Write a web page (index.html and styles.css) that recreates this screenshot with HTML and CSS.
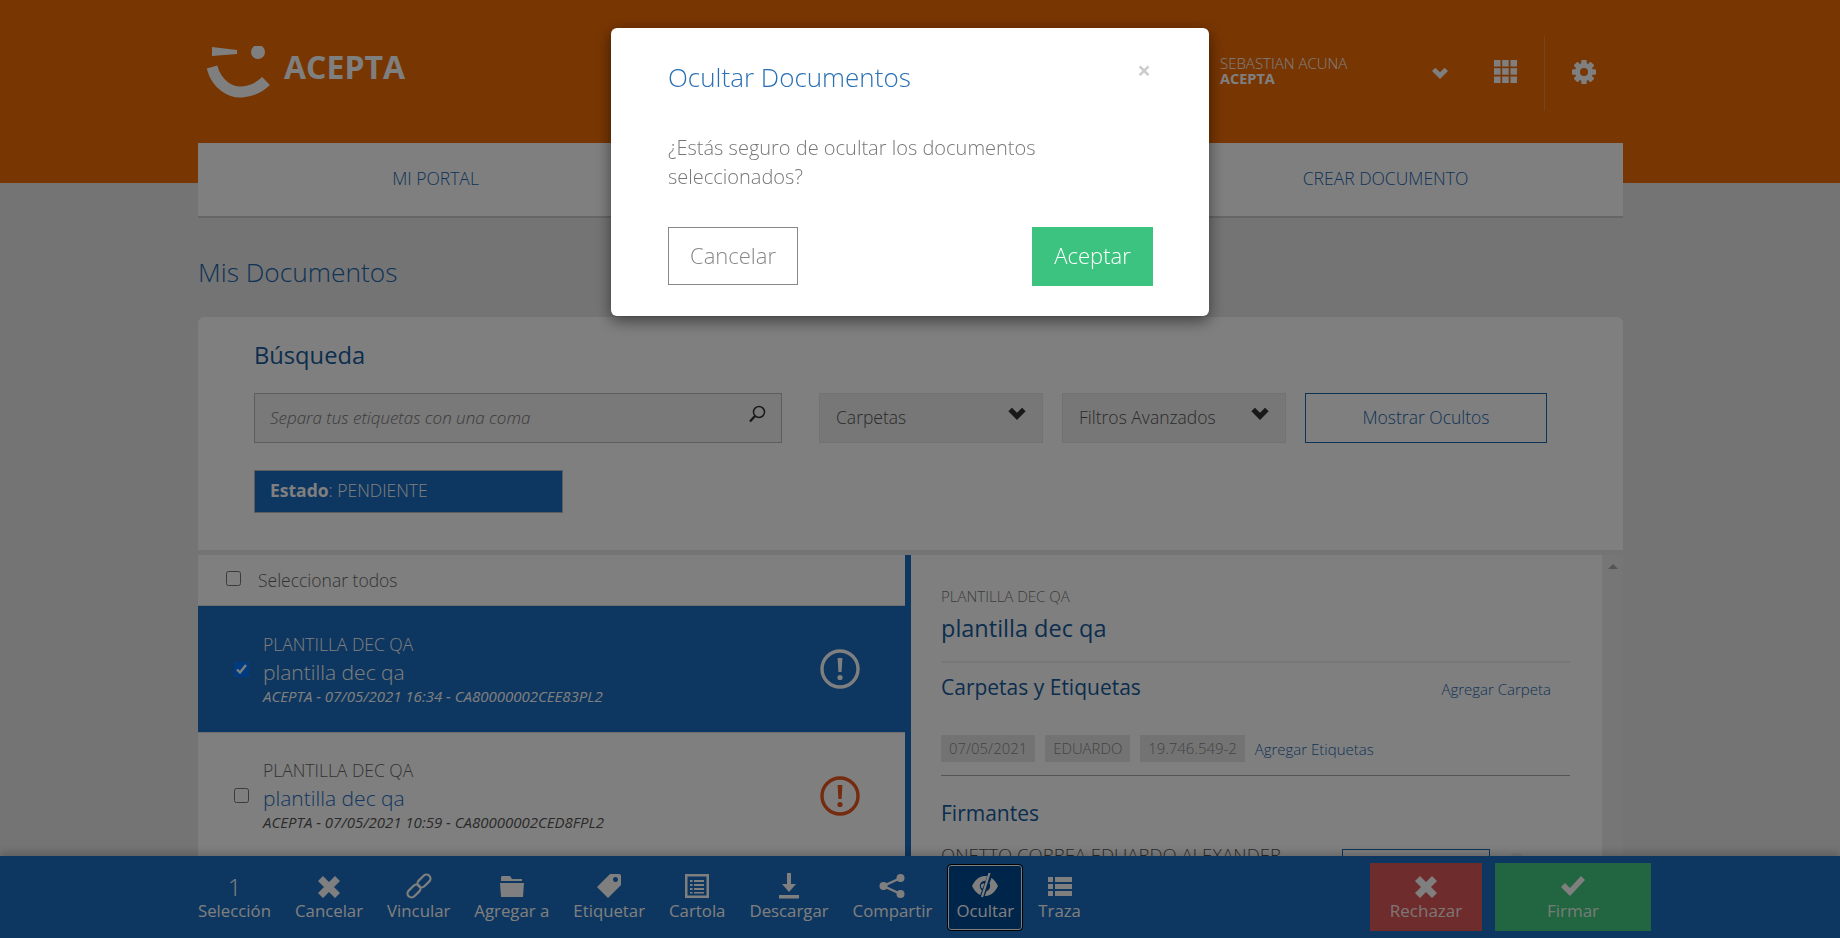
FILE: index.html
```html
<!DOCTYPE html>
<html>
<head>
<meta charset="UTF-8">
<title>Mis Documentos</title>
<link rel="stylesheet" href="styles.css">
</head>

<body>
<div class="top">
	<div class="head">
		<div class="logo">
			<svg width="64" height="52" viewBox="0 0 64 52"><path d="M6 1L31 4V8L6 10Z" fill="#fff"/><circle cx="52" cy="6" r="7" fill="#fff"/><path d="M6 21C11 40 26 47 36 46C46 45 54 41 60 35" fill="none" stroke="#fff" stroke-width="11"/></svg>
			<span>ACEPTA</span>
		</div>
		<div class="user"><span>SEBASTIAN ACUNA</span><b>ACEPTA</b></div>
		<svg class="user-arrow" width="16" height="12" viewBox="0 0 24 18"><path d="M12 18L0 6l5-5 7 7 7-7 5 5z" fill="#fff"/></svg>
		<svg class="apps" width="23" height="23" viewBox="0 0 23 23" fill="#fff"><rect width="6.5" height="6.5"/><rect x="8.2" width="6.5" height="6.5"/><rect x="16.5" width="6.5" height="6.5"/><rect y="8.2" width="6.5" height="6.5"/><rect x="8.2" y="8.2" width="6.5" height="6.5"/><rect x="16.5" y="8.2" width="6.5" height="6.5"/><rect y="16.5" width="6.5" height="6.5"/><rect x="8.2" y="16.5" width="6.5" height="6.5"/><rect x="16.5" y="16.5" width="6.5" height="6.5"/></svg>
		<div class="head-line"></div>
		<svg class="gear" width="24" height="24" viewBox="0 0 24 24" fill="#fff"><rect x="9.2" width="5.6" height="24" rx="1"/><rect x="9.2" width="5.6" height="24" rx="1" transform="rotate(45 12 12)"/><rect x="9.2" width="5.6" height="24" rx="1" transform="rotate(90 12 12)"/><rect x="9.2" width="5.6" height="24" rx="1" transform="rotate(135 12 12)"/><circle cx="12" cy="12" r="9"/><circle cx="12" cy="12" r="4" fill="#f06c06"/></svg>
	</div>
	<ul class="nav">
		<li>MI PORTAL</li>
		<li></li>
		<li>CREAR DOCUMENTO</li>
	</ul>
</div>

<div class="page">
	<h1>Mis Documentos</h1>
	<div class="search">
		<h2>Búsqueda</h2>
		<div class="search-row">
			<div class="field">
				<i>Separa tus etiquetas con una coma</i>
				<svg width="18" height="18" viewBox="0 0 18 18"><circle cx="11" cy="7" r="5.5" fill="none" stroke="#333" stroke-width="1.5"/><path d="M7 11L2 16.5" stroke="#333" stroke-width="2.4"/></svg>
			</div>
			<div class="drop">Carpetas<svg width="18" height="13" viewBox="0 0 24 18"><path d="M12 18L0 6l5-5 7 7 7-7 5 5z" fill="#333"/></svg></div>
			<div class="drop">Filtros Avanzados<svg width="18" height="13" viewBox="0 0 24 18"><path d="M12 18L0 6l5-5 7 7 7-7 5 5z" fill="#333"/></svg></div>
			<div class="btn-line">Mostrar Ocultos</div>
		</div>
		<div class="badge"><b>Estado</b>: PENDIENTE</div>
	</div>

	<div class="split">
		<div class="list">
			<label class="all"><input type="checkbox"><span>Seleccionar todos</span></label>
			<div class="item on">
				<input type="checkbox" checked>
				<div class="item-text">
					<p class="item-type">PLANTILLA DEC QA</p>
					<p class="item-name">plantilla dec qa</p>
					<p class="item-meta">ACEPTA - 07/05/2021 16:34 - CA80000002CEE83PL2</p>
				</div>
				<svg class="alert" width="40" height="40" viewBox="0 0 40 40"><circle cx="20" cy="20" r="18" fill="none" stroke="currentColor" stroke-width="3.4"/><path d="M17.6 9h4.8l-.8 14h-3.2z" fill="currentColor"/><circle cx="20" cy="28.5" r="2.6" fill="currentColor"/></svg>
			</div>
			<div class="item">
				<input type="checkbox">
				<div class="item-text">
					<p class="item-type">PLANTILLA DEC QA</p>
					<p class="item-name">plantilla dec qa</p>
					<p class="item-meta">ACEPTA - 07/05/2021 10:59 - CA80000002CED8FPL2</p>
				</div>
				<svg class="alert" width="40" height="40" viewBox="0 0 40 40"><circle cx="20" cy="20" r="18" fill="none" stroke="currentColor" stroke-width="3.4"/><path d="M17.6 9h4.8l-.8 14h-3.2z" fill="currentColor"/><circle cx="20" cy="28.5" r="2.6" fill="currentColor"/></svg>
			</div>
		</div>
		<div class="detail">
			<div class="detail-in">
				<p class="d-type">PLANTILLA DEC QA</p>
				<p class="d-name">plantilla dec qa</p>
				<div class="d-head"><h3>Carpetas y Etiquetas</h3><a>Agregar Carpeta</a></div>
				<div class="tags"><span>07/05/2021</span><span>EDUARDO</span><span>19.746.549-2</span><a>Agregar Etiquetas</a></div>
				<h3 class="d-firm">Firmantes</h3>
				<div class="signer"><span>ONETTO CORREA EDUARDO ALEXANDER</span><div class="signer-box"></div><div class="signer-dot"></div></div>
			</div>
			<div class="scroll"><div class="scroll-up"></div></div>
		</div>
	</div>
</div>

<div class="bar">
	<div class="tool"><div class="tool-num">1</div><span>Selección</span></div>
	<div class="tool"><svg width="22" height="26" viewBox="0 0 22 26"><path d="M5 3l6 6 6-6 5 5-6 6 6 6-5 5-6-6-6 6-5-5 6-6-6-6z"/></svg><span>Cancelar</span></div>
	<div class="tool"><svg class="hollow" width="26" height="26" viewBox="0 0 26 26"><rect x="0.5" y="14" width="15" height="8" rx="4" transform="rotate(-45 8 18)"/><rect x="10.5" y="4" width="15" height="8" rx="4" transform="rotate(-45 18 8)"/></svg><span>Vincular</span></div>
	<div class="tool"><svg width="26" height="26" viewBox="0 0 26 26"><path d="M3 3h8l2 3h10v2H2V4zM1 10h24l-1 14H2z"/></svg><span>Agregar a</span></div>
	<div class="tool"><svg width="26" height="26" viewBox="0 0 26 26"><path fill-rule="evenodd" d="M14 1h9a2 2 0 0 1 2 2v9L12 25 1 14zM19.5 4a2.5 2.5 0 1 0 .01 0z"/></svg><span>Etiquetar</span></div>
	<div class="tool"><svg width="24" height="26" viewBox="0 0 24 26"><path fill-rule="evenodd" d="M0 1h24v24H0zM2.5 3.5v19h19v-19z"/><path d="M5 7h2.5v2H5zM9 7h10v2H9zM5 11h2.5v2H5zM9 11h10v2H9zM5 15h2.5v2H5zM9 15h10v2H9zM5 19h2.5v1.5H5zM9 19h10v1.5H9z"/></svg><span>Cartola</span></div>
	<div class="tool"><svg width="22" height="26" viewBox="0 0 22 26"><path d="M9 0h4v11h5l-7 8-7-8h5zM1 22h20v3.5H1z"/></svg><span>Descargar</span></div>
	<div class="tool"><svg width="26" height="26" viewBox="0 0 26 26"><circle cx="21.5" cy="5" r="4"/><circle cx="4.5" cy="13" r="4"/><circle cx="21.5" cy="21" r="4"/><path d="M21.5 5L4.5 13l17 8" fill="none" stroke="#fff" stroke-width="2.4"/></svg><span>Compartir</span></div>
	<div class="tool tool-on"><svg width="26" height="26" viewBox="0 0 26 26"><path d="M13 3C6 3 2 9 0 13c2 4 6 10 13 10s11-6 13-10c-2-4-6-10-13-10z"/><circle cx="13" cy="13" r="5.2" fill="#004a95"/><circle cx="11.5" cy="13" r="2.6"/><path d="M18.5 1L9.500 25" stroke="#004a95" stroke-width="4.6"/><path d="M17.5 0L10 24" stroke="#fff" stroke-width="2.2"/></svg><span>Ocultar</span></div>
	<div class="tool"><svg width="26" height="26" viewBox="0 0 26 26"><path d="M1 4h5v5H1zM8 4h17v5H8zM1 11h5v5H1zM8 11h17v5H8zM1 18h5v5H1zM8 18h17v5H8z"/></svg><span>Traza</span></div>
	<div class="bar-right">
		<div class="act act-no"><svg width="22" height="26" viewBox="0 0 22 26"><path d="M5 3l6 6 6-6 5 5-6 6 6 6-5 5-6-6-6 6-5-5 6-6-6-6z"/></svg><span>Rechazar</span></div>
		<div class="act act-ok"><svg width="26" height="26" viewBox="0 0 26 26"><path d="M1 14l4-4 5 5L21 3l4 4-15 16z"/></svg><span>Firmar</span></div>
	</div>
</div>

<div class="shade">
	<div class="modal">
		<div class="modal-top"><h4>Ocultar Documentos</h4><span class="close">×</span></div>
		<p class="modal-text">¿Estás seguro de ocultar los documentos seleccionados?</p>
		<div class="modal-btns"><div class="m-cancel">Cancelar</div><div class="m-ok">Aceptar</div></div>
	</div>
</div>
</body>
</html>
```

FILE: styles.css
```css
*{ margin:0; padding:0; list-style:none; box-sizing:border-box;}
html,body{ height:100%;}
body{ display:flex; flex-direction:column; height:938px; overflow:hidden; background:#e8e8e8; font-family:"Open Sans",sans-serif; font-weight:300; color:#666;}

.top{ height:183px; flex:none; background:#f06c06; padding-left:198px;}
.head{ width:1425px; height:143px; display:flex; align-items:center; padding:0 27px 0 8px; color:#fff;}
.logo{ display:flex; align-items:center; gap:14px;}
.logo span{ font-size:32px; font-weight:700; line-height:32px; padding-bottom:9px;}
.user{ margin-left:auto; width:212px; display:flex; flex-direction:column; font-size:15px; line-height:16px; padding-bottom:1px;}
.user b{ font-size:14.5px; font-weight:700;}
.user-arrow{ margin-right:46px; margin-top:2px;}
.apps{ margin-right:27px;}
.head-line{ width:1px; height:75px; margin:4px 27px 0 0; background:rgba(255,255,255,0.2);}
.nav{ width:1425px; height:75px; display:grid; grid-template-columns:repeat(3,1fr); background:#fff; border-bottom:2px solid #ccc;}
.nav li{ text-align:center; line-height:70px; font-size:17.5px; color:#1a66ad;}

.page{ flex:1; min-height:0; width:1425px; margin-left:198px; padding-top:72px; overflow:hidden;}
h1{ font-size:26.3px; font-weight:300; line-height:34px; color:#1a66ad; margin-bottom:28px;}
.search{ height:233px; background:#fff; border-radius:6px 6px 0 0; padding:23px 0 0 56px;}
.search h2{ font-size:23.7px; font-weight:400; line-height:30px; color:#165a9c;}
.search-row{ display:flex; margin-top:23px; height:50px;}
.field{ width:528px; display:flex; align-items:center; justify-content:space-between; padding:0 15px 2px; background:#f2f2f2; border:1px solid #bbb; font-size:17px; color:#777;}
.field svg{ margin-bottom:6px;}
.drop{ width:224px; margin-left:19px; display:flex; align-items:center; justify-content:space-between; padding:0 16px 2px; background:#efefef; border:1px solid #e4e4e4; font-size:17.5px; color:#555;}
.drop svg{ margin-bottom:8px;}
.search-row .field + .drop{ margin-left:37px;}
.btn-line{ width:242px; margin-left:19px; border:1px solid #1a66ad; line-height:47px; text-align:center; font-size:17.5px; color:#1a66ad;}
.badge{ width:309px; height:43px; margin-top:27px; padding-left:15px; line-height:39px; background:#1a6cc0; border:1px solid #bbb; font-size:17.5px; color:#fff;}
.badge b{ font-weight:700;}

.split{ display:flex; height:360px; margin-top:5px;}
.list{ width:707px; flex:none; background:#fff;}
.all{ height:51px; display:flex; align-items:center; gap:17px; padding-left:28px; border-bottom:1px solid #ddd; font-size:17.5px; color:#666;}
.all input{ margin-top:-3px;}
input{ width:15px; height:15px; margin:0; flex:none;}
.item{ height:126px; display:flex; align-items:center; padding:0 45px 0 36px; border-bottom:1px solid #ddd;}
.item.on{ background:#1a6cc0; color:#fff; height:127px;}
.item-text{ flex:1; margin-left:14px;}
.item-type{ font-size:17.5px; line-height:22px;}
.item-name{ font-size:21px; line-height:30px; color:#1a6cc0; margin-top:2px;}
.on .item-name{ color:#fff;}
.item-meta{ font-size:15px; font-weight:400; font-style:italic; line-height:20px; color:#555; margin-top:-1px;}
.on .item-meta{ color:#fff;}
.alert{ color:#e8561c; flex:none;}
.on .alert{ color:#fff;}

.detail{ flex:1; display:flex; border-left:6px solid #1a6cc0; background:#fff;}
.detail-in{ width:659px; padding:30px 0 0 30px;}
.d-type{ font-size:15px; line-height:22px; color:#777;}
.d-name{ font-size:23.5px; font-weight:400; line-height:34px; margin-top:4px; padding-bottom:16px; color:#165a9c; border-bottom:2px solid #eee;}
.d-head{ display:flex; justify-content:space-between; align-items:center; margin-top:10px; height:28px; padding-right:19px;}
h3{ font-size:21px; font-weight:400; line-height:28px; color:#165a9c;}
a{ font-size:15px; color:#1a66ad;}
.d-head a{ padding-top:4px;}
.tags{ display:flex; align-items:center; gap:10px; margin-top:34px; padding-bottom:13px; border-bottom:1px solid #aaa;}
.tags span{ height:27px; line-height:26px; padding:0 8px; background:#e6e6e6; font-size:14.9px; color:#888;}
.d-firm{ margin-top:23px;}
.signer{ display:flex; margin-top:22px; font-size:18.5px; line-height:18px; color:#555;}
.signer span{ width:401px; margin-top:-3px;}
.signer-box{ width:148px; height:40px; border:1px solid #1a66ad;}
.signer-dot{ width:20px; height:20px; margin:4px 0 0 17px; border-radius:50%; background:#f0f0f0;}
.scroll{ width:21px; margin-left:auto; background:#ececec; padding-top:9px;}
.scroll-up{ width:0; margin:0 auto; border:5px solid transparent; border-top:0; border-bottom:5px solid #aaa;}

.bar{ height:82px; flex:none; position:relative; display:flex; align-items:center; padding:0 189px 0 198px; gap:24px; background:#1a6cc0; box-shadow:0 -3px 8px rgba(0,0,0,0.2); color:#fff;}
.tool{ height:65px; display:flex; flex-direction:column; align-items:center; justify-content:center; font-size:16.8px; font-weight:400; line-height:22px; white-space:nowrap; padding-top:1px;}
.tool svg,.act svg{ fill:#fff; display:block; margin-bottom:1px;}
.tool svg.hollow{ fill:none; stroke:#fff; stroke-width:2.2;}
.tool-num{ height:26px; font-size:24px; font-weight:300; line-height:26px;}
.tool-on{ width:74px; margin:0 -8px; background:#004a95; border:1px solid #fff; outline:1px solid #000; border-radius:3px;}
.bar-right{ margin-left:auto; display:flex; gap:13px;}
.act{ height:68px; display:flex; flex-direction:column; align-items:center; justify-content:center; font-size:17px; font-weight:400; line-height:22px; color:rgba(255,255,255,0.9);}
.act-no{ width:112px; background:#de5858;}
.act-ok{ width:156px; background:#42cc80;}

.shade{ position:fixed; left:0; top:0; right:0; bottom:0; display:flex; justify-content:center; padding:28px 20px 0 0; background:rgba(0,0,0,0.5);}
.modal{ width:598px; height:288px; padding:0 56px 0 57px; background:#fff; border-radius:6px; box-shadow:0 5px 15px rgba(0,0,0,0.5);}
.modal-top{ display:flex; justify-content:space-between; padding-top:32px;}
.modal-top h4{ font-size:26px; font-weight:300; line-height:34px; color:#2a70b4;}
.close{ font-size:24px; font-weight:700; line-height:20px; margin-right:2px; color:#ccc;}
.modal-text{ margin-top:39px; font-size:20px; line-height:29px; color:#777;}
.modal-btns{ display:flex; justify-content:space-between; margin-top:36px;}
.m-cancel{ width:130px; height:58px; border:1px solid #888; line-height:54px; text-align:center; font-size:22px; color:#888;}
.m-ok{ width:121px; height:59px; line-height:57px; text-align:center; background:#3dc380; font-size:22px; color:#fff;}
```
